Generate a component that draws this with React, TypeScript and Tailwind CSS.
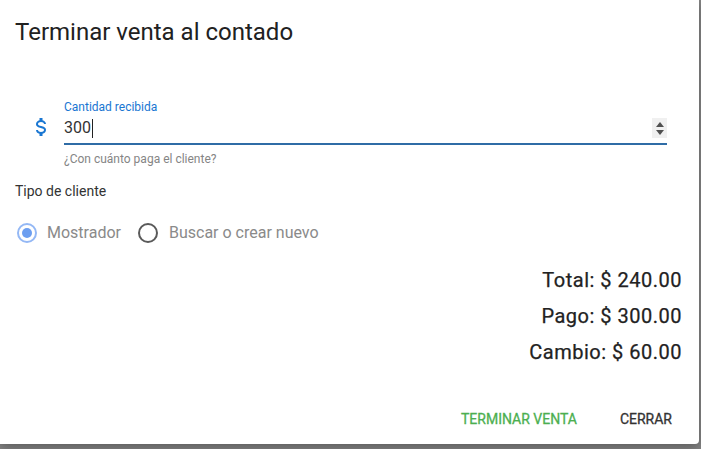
import React from "react";

export default function App() {
  return (
    <div
      className="w-[701px] h-[449px] bg-[#858585] overflow-hidden"
      style={{ fontFamily: "Roboto, 'Liberation Sans', sans-serif" }}
    >
      <div className="w-[699px] h-[444px] bg-white rounded-br-[4px] shadow-[0_4px_12px_rgba(0,0,0,0.3)] flex flex-col">
        {/* Title */}
        <div className="pt-[16px] pl-[15px] text-[24px] leading-[32px] text-[#212121]">
          Terminar venta al contado
        </div>

        {/* Field */}
        <div className="flex mt-[51px] pl-[29px] pr-[32px]">
          <div className="w-[24px] h-[24px] mt-[16px] shrink-0">
            <svg viewBox="0 0 24 24" width="24" height="24">
              <path
                fill="#1976d2"
                d="M7,15H9C9,16.08 10.37,17 12,17C13.63,17 15,16.08 15,15C15,13.9 13.96,13.5 11.76,12.97C9.64,12.44 7,11.78 7,9C7,7.21 8.47,5.69 10.5,5.18V3H13.5V5.18C15.53,5.69 17,7.21 17,9H15C15,7.92 13.63,7 12,7C10.37,7 9,7.92 9,9C9,10.1 10.04,10.5 12.24,11.03C14.36,11.56 17,12.22 17,15C17,16.79 15.53,18.31 13.5,18.82V21H10.5V18.82C8.47,18.31 7,16.79 7,15Z"
              />
            </svg>
          </div>
          <div className="ml-[11px] flex-1 flex flex-col">
            <div className="text-[12px] leading-[16px] text-[#1976d2]">Cantidad recibida</div>
            <div className="mt-[1px] h-[24px] flex items-center justify-between">
              <div className="flex items-center text-[16px] text-[#333]">
                <span>300</span>
                <span className="w-px h-[19px] bg-[#222] ml-[1px]"></span>
              </div>
              <div className="w-[15px] h-[20px] bg-[#f0f0f0] flex flex-col items-center justify-center gap-[3px]">
                <svg width="8" height="5" viewBox="0 0 8 5">
                  <path d="M0 5 L4 0 L8 5 Z" fill="#505050" />
                </svg>
                <svg width="8" height="5" viewBox="0 0 8 5">
                  <path d="M0 0 L8 0 L4 5 Z" fill="#505050" />
                </svg>
              </div>
            </div>
            <div className="mt-[3px] h-[2px] bg-[#2f6ca6]"></div>
            <div className="mt-[6px] text-[12px] leading-[16px] text-[#858585]">
              ¿Con cuánto paga el cliente?
            </div>
          </div>
        </div>

        {/* Tipo de cliente */}
        <div className="mt-[14px] pl-[15px] text-[14px] leading-[20px] text-[#333]">
          Tipo de cliente
        </div>

        <div className="mt-[20px] pl-[15px] flex items-center h-[24px]">
          <div className="flex items-center">
            <svg width="24" height="24" viewBox="0 0 24 24">
              <circle cx="12" cy="12" r="9" fill="none" stroke="#94b8f5" strokeWidth="2" />
              <circle cx="12" cy="12" r="5" fill="#6c9ef0" />
            </svg>
            <span className="ml-[8px] text-[16px] text-[#8a8a8a]">Mostrador</span>
          </div>
          <div className="flex items-center ml-[15px]">
            <svg width="24" height="24" viewBox="0 0 24 24">
              <circle cx="12" cy="12" r="9" fill="none" stroke="#5a5a5a" strokeWidth="2" />
            </svg>
            <span className="ml-[9px] text-[16px] text-[#8a8a8a]">Buscar o crear nuevo</span>
          </div>
        </div>

        {/* Totals */}
        <div className="mt-[17px] pr-[17px] flex flex-col items-end text-[20px] leading-[36px] font-normal tracking-[0.5px] text-[#222] [-webkit-text-stroke:0.25px_#222]">
          <div>Total: $ 240.00</div>
          <div>Pago: $ 300.00</div>
          <div>Cambio: $ 60.00</div>
        </div>

        <div className="flex-1"></div>

        {/* Actions */}
        <div className="flex justify-end items-center h-[36px] mb-[7px] pr-[27px] gap-[43px] text-[14px] font-normal tracking-[0px] uppercase [-webkit-text-stroke:0.3px_currentColor]">
          <span className="text-[#4caf50]">Terminar venta</span>
          <span className="text-[#333]">Cerrar</span>
        </div>
      </div>
    </div>
  );
}
